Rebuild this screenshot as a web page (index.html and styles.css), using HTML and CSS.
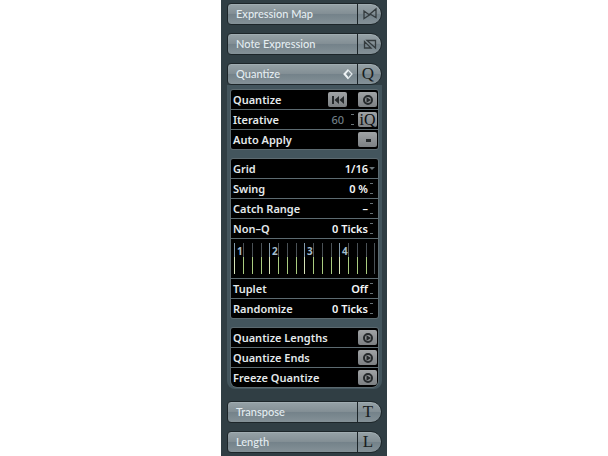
FILE: index.html
```html
<!DOCTYPE html>
<html lang="en">
<head>
<meta charset="utf-8">
<title>Quantize inspector</title>
<link rel="stylesheet" href="styles.css">
</head>
<body>
<svg class="defs" aria-hidden="true">
  <symbol id="play" viewBox="0 0 18 14"><circle cx="9" cy="7" r="4" fill="none" stroke="#25292b" stroke-width="2"/><path d="M7.500 4.300 12 7 7.500 9.700z" fill="#25292b"/></symbol>
</svg>
<main class="inspector">
  <section class="tab"><button class="title">Expression Map</button><button class="badge" aria-label="Expression map options"><svg width="16" height="14" viewBox="0 0 16 14"><path d="M2 4v7.500l5.500-3.500zM14 2v8.500L8 7z" fill="none" stroke="#343b3e" stroke-width="1.300"/></svg></button></section>
  <section class="tab"><button class="title">Note Expression</button><button class="badge" aria-label="Note expression options"><svg width="16" height="14" viewBox="0 0 16 14"><path d="M2.500 4.500v6.500h6.500zM5 3.500h8.500V11z" fill="none" stroke="#343b3e" stroke-width="1.300"/></svg></button></section>
  <section class="tab open"><button class="title">Quantize<svg width="12" height="14" viewBox="0 0 12 14"><path d="M6 3 10 7l-4 4.500L2 7z" fill="none" stroke="#e3eaed" stroke-width="1.200"/><path d="M1.500 7 6 2v2.500L4 7l2 2.500V12z" fill="#eef3f5"/></svg></button><button class="badge letter">Q</button></section>
  <div class="body">
    <div class="group">
      <div class="row"><span>Quantize</span><button class="key rewind" aria-label="Reset quantize"><svg width="18" height="14" viewBox="0 0 18 14"><path d="M3 3h2v8H3zM10 3v8L5.500 7zM15 3v8l-4.500-4z" fill="#25292b"/></svg></button><button class="key" aria-label="Apply quantize"><svg width="18" height="14"><use href="#play"/></svg></button></div>
      <div class="row"><span>Iterative</span><output class="dim">60</output><i class="step wide"></i><button class="key iq">iQ</button></div>
      <div class="row"><span>Auto Apply</span><button class="key" aria-label="Auto apply"><svg width="18" height="14" viewBox="0 0 18 14"><path d="M7 6h5v3H7z" fill="#25292b"/></svg></button></div>
    </div>
    <div class="group">
      <div class="row value"><span>Grid</span><output>1/16</output><i class="drop"></i></div>
      <div class="row value"><span>Swing</span><output>0 %</output><i class="step"></i></div>
      <div class="row value"><span>Catch Range</span><output>–</output><i class="step"></i></div>
      <div class="row value"><span>Non–Q</span><output>0 Ticks</output><i class="step"></i></div>
      <div class="ruler">
        <div class="beat"><b>1</b></div><div class="beat"><b>2</b></div><div class="beat"><b>3</b></div><div class="beat"><b>4</b></div><div class="end"></div>
      </div>
      <div class="row value"><span>Tuplet</span><output>Off</output><i class="step"></i></div>
      <div class="row value"><span>Randomize</span><output>0 Ticks</output><i class="step"></i></div>
    </div>
    <div class="group last">
      <div class="row"><span>Quantize Lengths</span><button class="key" aria-label="Quantize lengths"><svg width="18" height="14"><use href="#play"/></svg></button></div>
      <div class="row"><span>Quantize Ends</span><button class="key" aria-label="Quantize ends"><svg width="18" height="14"><use href="#play"/></svg></button></div>
      <div class="row"><span>Freeze Quantize</span><button class="key" aria-label="Freeze quantize"><svg width="18" height="14"><use href="#play"/></svg></button></div>
    </div>
  </div>
  <section class="tab"><button class="title">Transpose</button><button class="badge letter">T</button></section>
  <section class="tab"><button class="title">Length</button><button class="badge letter">L</button></section>
</main>
</body>
</html>
```
FILE: styles.css
```css
* { box-sizing: border-box; }
body {
  margin: 0;
  background: #fff;
  font-family: "Noto Sans", "Open Sans", sans-serif;
  font-size: 11px;
}
button {
  margin: 0;
  padding: 0;
  border: 0;
  font: inherit;
  color: inherit;
  background: none;
}
.defs { position: absolute; width: 0; height: 0; }
.inspector {
  max-width: 166px;
  min-height: 100vh;
  margin: 0 auto;
  padding: 3px 5px 0 6px;
  background: #303e44;
}
.tab {
  display: flex;
  height: 22px;
  margin-bottom: 8px;
  border: 1px solid #1c2529;
  border-radius: 4px 11px 11px 4px;
  background: linear-gradient(#96a2a7, #838f95 48%, #74828a 52%, #849197);
  box-shadow: inset 0 1px 0 #a0acb1;
}
.tab:last-child { margin-bottom: 0; }
.tab.open { margin-bottom: 0; }
.title {
  display: flex;
  flex: 1;
  align-items: center;
  justify-content: space-between;
  padding: 0 3px 1px 8px;
  color: #e4edf1;
  font-family: Lato, sans-serif;
  font-weight: 500;
}
.badge {
  display: flex;
  width: 24px;
  align-items: center;
  justify-content: center;
  border-left: 1px solid #1c2529;
}
.letter {
  padding-right: 3px;
  font: 17px/20px "Liberation Serif", serif;
  color: #181d20;
}
.body {
  display: grid;
  gap: 8px;
  margin-bottom: 12px;
  padding: 4px 3px 1px 3px;
  border-radius: 0 0 8px 8px;
  background: #43555d;
}
.group {
  display: grid;
  gap: 1px;
  border: 1px solid #5c6a70;
  border-radius: 3px;
  background: #5c6a70;
  overflow: hidden;
}
.group.last { border-radius: 3px 3px 7px 7px; }
.row {
  display: flex;
  height: 19px;
  align-items: center;
  padding: 0 1px 0 2px;
  background: #000;
  color: #e4e9eb;
  font-weight: 600;
  line-height: 15px;
}
.row span { flex: 1; }
.value output { color: #f4f6f7; }
.row .dim { color: #6f7d84; font-weight: 500; }
.key {
  display: flex;
  width: 19px;
  height: 15px;
  align-items: center;
  justify-content: center;
  border-radius: 2px;
  background: linear-gradient(#a0a3a5, #7c8083);
  color: #0c0e0f;
}
.rewind { margin-right: 11px; }
.iq { font: 16px/15px "Liberation Serif", serif; }
.step {
  width: 3px;
  height: 11px;
  margin: 0 4px 0 2px;
  border: solid #687277;
  border-width: 1px 0;
}
.step.wide { margin: 0 4px 0 7px; }
.drop {
  width: 6px;
  margin: 0 2px 0 1px;
  border: 3px solid transparent;
  border-top-color: #687277;
  border-bottom: 0;
}
.ruler {
  display: grid;
  grid-template-columns: repeat(4, 1fr) 1px;
  height: 39px;
  padding: 4px 3px;
  background: #000;
}
.beat {
  padding-left: 3px;
  background:
    linear-gradient(#8298a8 45%, #d5e2b8 45%) 0 0 / 1px 100% no-repeat,
    repeating-linear-gradient(90deg, #a9cc80 0 1px, transparent 1px 9px) 0 100% / 100% 55% no-repeat,
    repeating-linear-gradient(90deg, #4a5156 0 1px, transparent 1px 9px) 0 0 / 100% 45% no-repeat;
}
.end { background: #4a5156; }
.beat b {
  color: #a4bdce;
  font-size: 10px;
  line-height: 13px;
}
```
